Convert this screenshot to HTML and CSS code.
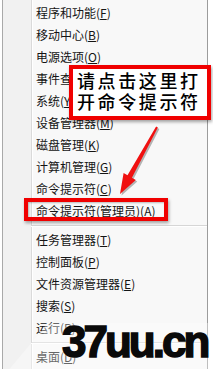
FILE: index.html
```html
<!DOCTYPE html>
<html lang="zh-CN">
<head>
<meta charset="utf-8">
<title>Win+X 菜单</title>
<link rel="stylesheet" href="styles.css">
</head>
<body>
<div class="stage">
  <div class="menu">
    <div class="item">程序和功能(<u>F</u>)</div>
    <div class="item">移动中心(<u>B</u>)</div>
    <div class="item">电源选项(<u>O</u>)</div>
    <div class="item">事件查看器(<u>V</u>)</div>
    <div class="item">系统(<u>Y</u>)</div>
    <div class="item">设备管理器(<u>M</u>)</div>
    <div class="item">磁盘管理(<u>K</u>)</div>
    <div class="item">计算机管理(<u>G</u>)</div>
    <div class="item">命令提示符(<u>C</u>)</div>
    <div class="item">命令提示符(管理员)(<u>A</u>)</div>
    <div class="sep"></div>
    <div class="item">任务管理器(<u>T</u>)</div>
    <div class="item">控制面板(<u>P</u>)</div>
    <div class="item">文件资源管理器(<u>E</u>)</div>
    <div class="item">搜索(<u>S</u>)</div>
    <div class="item">运行(<u>R</u>)</div>
    <div class="sep"></div>
    <div class="item">桌面(<u>D</u>)</div>
  </div>

  <div class="highlight"></div>

  <div class="callout">
    <div class="callout-line">请点击这里打</div>
    <div class="callout-line">开命令提示符</div>
  </div>

  <svg class="arrow" width="213" height="369" viewBox="0 0 213 369">
    <g transform="translate(1.5,1.5)" fill="#000" opacity="0.28">
      <polygon points="157.9,127.5 156.1,126.5 127.5,175.3 123.6,173.1 120,194 135.8,179.9 131.9,177.7"/>
    </g>
    <polygon fill="#f01010" points="157.9,127.5 156.1,126.5 127.5,175.3 123.6,173.1 120,194 135.8,179.9 131.9,177.7"/>
  </svg>

  <div class="band"></div>
  <div class="watermark">37uu.cn</div>
</div>
</body>
</html>
```
FILE: styles.css
```css
html, body {
  margin: 0;
  padding: 0;
  background: #ffffff;
}
.stage {
  position: relative;
  width: 213px;
  height: 369px;
  overflow: hidden;
  font-family: "Noto Sans CJK SC", "Noto Sans", sans-serif;
}
.menu {
  margin-left: 2px;
  width: 206px;
  height: 369px;
  box-sizing: border-box;
  padding-top: 2px;
  border-left: 1px solid #a9a9a9;
  border-right: 1px solid #9c9c9c;
  background: linear-gradient(to right, #f1f1f1 0, #f1f1f1 28px, #dadada 28px, #dadada 29px, #ffffff 29px, #ffffff 30px, #f8f8f8 30px);
}
.item {
  height: 22px;
  line-height: 22px;
  padding-left: 33px;
  font-size: 12px;
  color: #141414;
  white-space: nowrap;
}
.item u {
  text-decoration: underline;
  text-underline-offset: 1px;
}
.sep {
  margin: 3px 0 2px 28px;
  border-top: 1px solid #d6d6d6;
  border-bottom: 1px solid #ffffff;
}
.highlight {
  position: absolute;
  left: 24px;
  top: 198px;
  width: 144px;
  height: 23px;
  box-sizing: border-box;
  border: 4px solid #f00000;
  box-shadow: 1px 2px 3px rgba(0,0,0,0.35), inset 1px 1px 2px rgba(0,0,0,0.25);
}
.callout {
  position: absolute;
  left: 69px;
  top: 65px;
  width: 142px;
  height: 55px;
  box-sizing: border-box;
  border: 4px solid #f00000;
  background: #ffffff;
  padding: 1px 0 0 4px;
  box-shadow: 1px 2px 3px rgba(0,0,0,0.35);
}
.callout-line {
  font-size: 18px;
  line-height: 21px;
  font-weight: 500;
  letter-spacing: 2.6px;
  color: #000000;
  white-space: nowrap;
}
.arrow {
  position: absolute;
  left: 0;
  top: 0;
}
.band {
  position: absolute;
  left: 48px;
  top: 323px;
  width: 200px;
  height: 50px;
  background: rgba(255,255,255,0.35);
  transform: skewX(-40deg);
  transform-origin: 0 0;
}
.watermark {
  position: absolute;
  left: 62px;
  top: 317px;
  font-family: "Liberation Sans", Arial, sans-serif;
  font-weight: 700;
  font-size: 44px;
  line-height: 50px;
  letter-spacing: -3px;
  color: #0a0a0a;
  -webkit-text-stroke: 1.5px #0a0a0a;
  text-shadow: 0 0 2px #ffffff, 0 0 2px #ffffff;
  white-space: nowrap;
}
```
